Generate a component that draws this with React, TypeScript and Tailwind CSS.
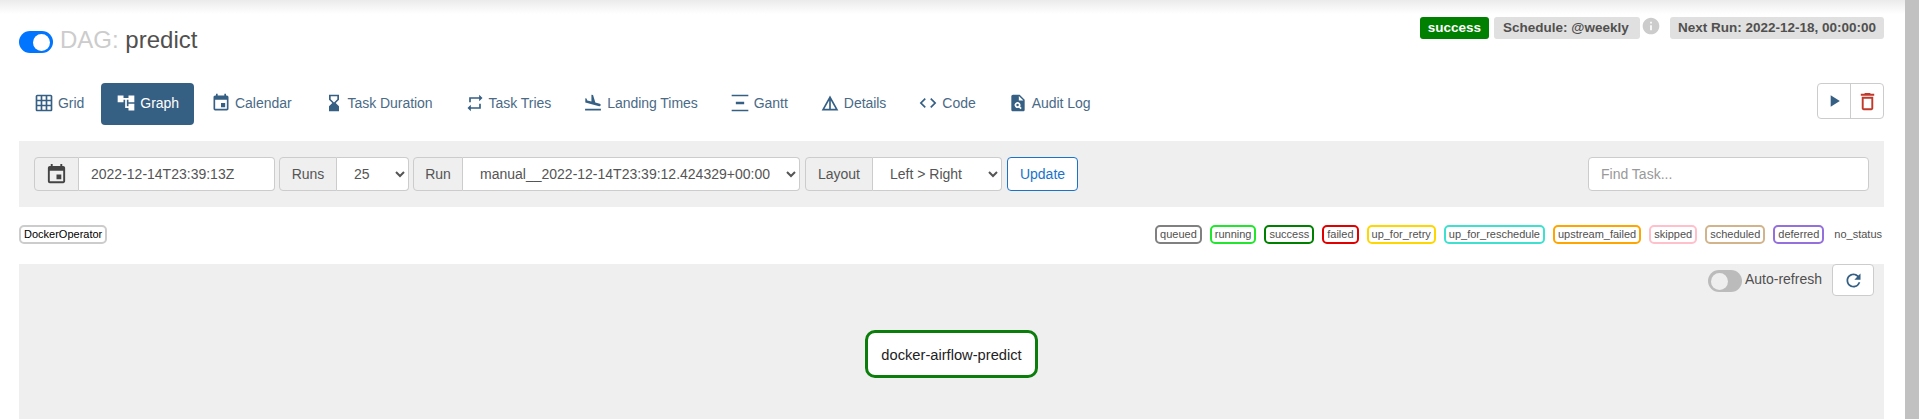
import {
  MdAccountTree,
  MdCode,
  MdDeleteOutline,
  MdDetails,
  MdEvent,
  MdFlightLand,
  MdGridOn,
  MdHourglassBottom,
  MdInfo,
  MdPlagiarism,
  MdPlayArrow,
  MdRefresh,
  MdRepeat,
  MdVerticalDistribute,
} from "react-icons/md";

const tabs = [
  { label: "Grid", icon: MdGridOn },
  { label: "Graph", icon: MdAccountTree, active: true },
  { label: "Calendar", icon: MdEvent },
  { label: "Task Duration", icon: MdHourglassBottom },
  { label: "Task Tries", icon: MdRepeat },
  { label: "Landing Times", icon: MdFlightLand },
  { label: "Gantt", icon: MdVerticalDistribute },
  { label: "Details", icon: MdDetails },
  { label: "Code", icon: MdCode },
  { label: "Audit Log", icon: MdPlagiarism },
];

const states = [
  { label: "queued", border: "border-[#808080]" },
  { label: "running", border: "border-[#22e62e]" },
  { label: "success", border: "border-[#008000]" },
  { label: "failed", border: "border-[#e00000]" },
  { label: "up_for_retry", border: "border-[#ffd700]" },
  { label: "up_for_reschedule", border: "border-[#40e0d0]" },
  { label: "upstream_failed", border: "border-[#ffa500]" },
  { label: "skipped", border: "border-[#ffc0cb]" },
  { label: "scheduled", border: "border-[#d2b48c]" },
  { label: "deferred", border: "border-[#9370db]" },
];

const Addon = ({ children, width }: { children: string; width: string }) => (
  <span className={`flex h-[34px] shrink-0 items-center justify-center rounded-l border border-[#ccc] bg-[#efefef] text-[14px] text-[#555] ${width}`}>
    {children}
  </span>
);

const Select = ({ value, width }: { value: string; width: string }) => (
  <select
    defaultValue={value}
    className={`h-[34px] rounded-r border border-l-0 border-[#ccc] bg-white px-[13px] text-[14px] text-[#555] ${width}`}
  >
    <option>{value}</option>
  </select>
);

export default function App() {
  return (
    <div className="flex h-[419px] w-full overflow-hidden bg-white font-['Liberation_Sans',Arial,sans-serif]">
      <main className="relative flex min-w-0 flex-1 flex-col pl-[19px] pr-[21px]">
        <div className="pointer-events-none absolute inset-x-0 top-0 z-10 h-[14px] bg-gradient-to-b from-[#ebebeb] to-transparent" />

        <header className="flex h-[83px] shrink-0 justify-between">
          <div className="mt-[31px] flex h-[22px] items-center">
            <span className="flex h-[22px] w-[34px] items-center justify-end rounded-full bg-[#0075ff] pr-[3px]">
              <span className="h-[17px] w-[17px] rounded-full bg-white" />
            </span>
            <h1 className="ml-[7px] mt-[-4px] text-[24px] leading-[22px] text-[#51504f]">
              <span className="text-[#ccc]">DAG: </span>predict
            </h1>
          </div>
          <div className="mt-[17px] flex h-[22px] items-start text-[13.5px] font-bold text-[#51504f]">
            <span className="flex h-[22px] items-center rounded-[3px] bg-[#008000] px-2 text-white">success</span>
            <span className="ml-[5px] flex h-[22px] w-[146px] items-center rounded-[3px] bg-[#e0e0e0] pl-[9px]">Schedule: @weekly</span>
            <MdInfo className="ml-px mt-[-1px] text-[#ccc]" size={20} />
            <span className="ml-[9px] flex h-[22px] w-[214px] items-center justify-center rounded-[3px] bg-[#e0e0e0]">Next Run: 2022-12-18, 00:00:00</span>
          </div>
        </header>

        <nav className="flex h-[42px] shrink-0 items-start justify-between">
          <div className="flex gap-[2px]">
            {tabs.map((tab) => (
              <a
                key={tab.label}
                className={`flex h-[42px] items-center gap-1 rounded px-[15px] pb-[2px] text-[14px] tracking-[-0.04px] ${
                  tab.active ? "bg-[#365f84] text-white" : "text-[#4a6a86]"
                }`}
              >
                <tab.icon size={20} className={tab.active ? "text-white" : "text-[#365f84]"} />
                {tab.label}
              </a>
            ))}
          </div>
          <div className="flex h-9 w-[67px] rounded border border-[#ccc]">
            <button className="flex flex-1 items-center justify-center border-r border-[#ccc]">
              <MdPlayArrow size={20} className="text-[#365f84]" />
            </button>
            <button className="flex flex-1 items-center justify-center">
              <MdDeleteOutline size={23} className="text-[#c0392b]" />
            </button>
          </div>
        </nav>

        <section className="mt-4 flex h-[66px] shrink-0 items-center justify-between bg-[#efefef] px-[15px]">
          <div className="flex items-center">
            <div className="flex">
              <span className="flex h-[34px] w-[45px] items-center justify-center rounded-l border border-[#ccc] bg-[#efefef]">
                <MdEvent size={23} className="text-[#444]" />
              </span>
              <input
                readOnly
                defaultValue="2022-12-14T23:39:13Z"
                className="h-[34px] w-[196px] rounded-r border border-l-0 border-[#ccc] bg-white px-3 text-[14px] text-[#555]"
              />
            </div>
            <div className="ml-1 flex">
              <Addon width="w-[58px]">Runs</Addon>
              <Select value="25" width="w-[72px]" />
            </div>
            <div className="ml-1 flex">
              <Addon width="w-[50px]">Run</Addon>
              <Select value="manual__2022-12-14T23:39:12.424329+00:00" width="w-[337px]" />
            </div>
            <div className="ml-[5px] flex">
              <Addon width="w-[68px]">Layout</Addon>
              <Select value="Left > Right" width="w-[129px]" />
            </div>
            <button className="ml-[5px] h-[34px] w-[71px] rounded border border-[#1a73c9] bg-white text-[14px] text-[#1a73c9]">
              Update
            </button>
          </div>
          <input
            placeholder="Find Task..."
            className="h-[34px] w-[281px] rounded border border-[#ccc] bg-white px-3 text-[14px] text-[#555] placeholder:text-[#999]"
          />
        </section>

        <div className="flex h-[57px] shrink-0 items-center justify-between pb-5 pr-[2px] pt-[18px] text-[11px] text-[#51504f]">
          <span className="flex h-[19px] items-center rounded-[5px] border-2 border-[#ccc] bg-white px-[3px] text-black">DockerOperator</span>
          <div className="flex items-center gap-2">
            {states.map((state) => (
              <span key={state.label} className={`flex h-[19px] items-center rounded-[5px] border-2 bg-white px-[3px] ${state.border}`}>
                {state.label}
              </span>
            ))}
            <span className="ml-[2px]">no_status</span>
          </div>
        </div>

        <section className="relative min-h-0 flex-1 bg-[#efefef]">
          <div className="flex items-start justify-end pr-[10px]">
            <span className="mt-[6px] flex h-[22px] w-[34px] items-center rounded-full bg-[#bbb] pl-[3px]">
              <span className="h-[17px] w-[17px] rounded-full bg-[#eee]" />
            </span>
            <span className="ml-[3px] mt-[5px] text-[14px] leading-5 text-[#51504f]">Auto-refresh</span>
            <button className="ml-[10px] flex h-8 w-[42px] items-center justify-center rounded border border-[#ccc] bg-white">
              <MdRefresh size={21} className="text-[#365f84]" />
            </button>
          </div>
          <div className="absolute left-[846px] top-[66px] flex h-12 w-[173px] items-center justify-center rounded-[10px] border-[3px] border-[#0a7d0a] bg-white pt-[3px] text-[14.7px] text-[#222]">
            docker-airflow-predict
          </div>
        </section>
      </main>

      <div className="w-[14px] shrink-0 bg-[#c1c1c1]" />
    </div>
  );
}
